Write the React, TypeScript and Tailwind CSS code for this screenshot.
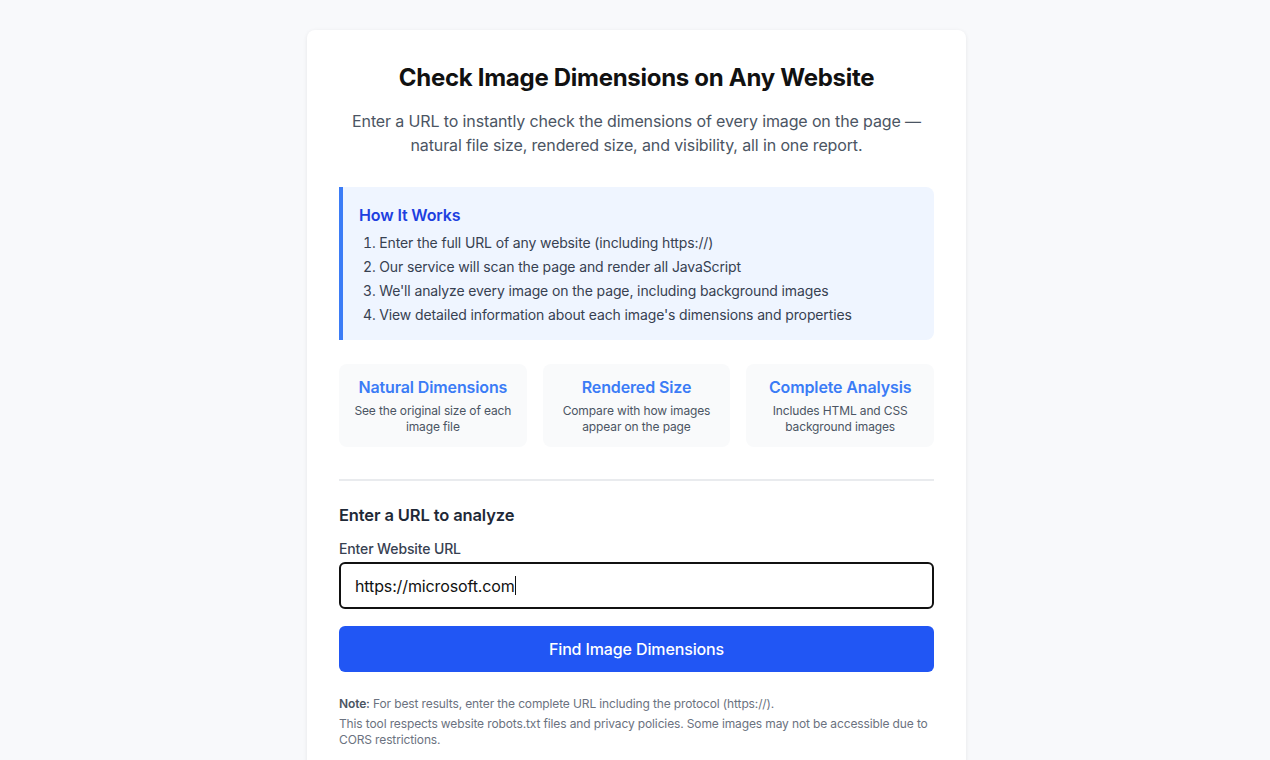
const steps = [
  "Enter the full URL of any website (including https://)",
  "Our service will scan the page and render all JavaScript",
  "We'll analyze every image on the page, including background images",
  "View detailed information about each image's dimensions and properties",
];

const features = [
  { title: "Natural Dimensions", desc: "See the original size of each image file" },
  { title: "Rendered Size", desc: "Compare with how images appear on the page" },
  { title: "Complete Analysis", desc: "Includes HTML and CSS background images" },
];

export default function App() {
  return (
    <div className="min-h-screen bg-[#f8f9fb] pl-[3px] pt-[30px] pb-10 font-['Inter',sans-serif] antialiased tracking-[-0.008em]">
      <div className="w-[659px] mx-auto bg-white rounded-lg shadow-[0_1px_4px_rgba(0,0,0,0.08)] px-8 pt-[32px] pb-8">
        <h1 className="text-[24px] leading-8 font-bold text-[#111] text-center tracking-[-0.012em]">
          Check Image Dimensions on Any Website
        </h1>
        <p className="mt-[15px] text-base leading-6 text-[#4b5563] text-center px-2">
          Enter a URL to instantly check the dimensions of every image on the page — natural file size, rendered size, and visibility, all in one report.
        </p>

        {/* How it works */}
        <div className="mt-[30px] bg-[#eff5ff] border-l-4 border-[#3b7cf6] rounded-r-lg px-4 pt-4 pb-[15px]">
          <h2 className="text-base leading-6 font-semibold text-[#1d40e0]">How It Works</h2>
          <ol className="mt-1.5 pl-1 list-decimal list-inside space-y-1 text-sm leading-5 text-[#374151]">
            {steps.map(s => <li key={s}>{s}</li>)}
          </ol>
        </div>

        {/* Features */}
        <div className="mt-6 grid grid-cols-3 gap-4">
          {features.map(f => (
            <div key={f.title} className="bg-[#f9fafb] rounded-lg px-3 pt-[11px] pb-3 text-center">
              <h3 className="text-base leading-6 font-semibold text-[#3b7cf6]">{f.title}</h3>
              <p className="mt-[4px] text-xs leading-4 text-[#4b5563]">{f.desc}</p>
            </div>
          ))}
        </div>

        <hr className="mt-8 border-0 border-t-2 border-[#e9ebee]" />

        <h2 className="mt-[20px] text-[16.5px] leading-7 font-semibold text-[#1f2937]">Enter a URL to analyze</h2>
        <label className="block mt-[10px] text-sm leading-5 font-medium text-[#374151]">Enter Website URL</label>
        <div className="mt-[3px] w-full h-[47px] border-2 border-[#111] rounded-md px-[14px] flex items-center text-base text-[#111]">
          <span>https://microsoft.com</span>
          <span className="w-px h-[19px] bg-[#111]" />
        </div>
        <button className="mt-[17px] w-full h-[46px] rounded-md bg-[#2156f4] text-white text-base font-medium">
          Find Image Dimensions
        </button>

        <p className="mt-[24px] text-xs leading-4 text-[#6b7280]">
          <span className="font-semibold text-[#4b5563]">Note:</span> For best results, enter the complete URL including the protocol (https://).
        </p>
        <p className="mt-1 text-xs leading-4 text-[#6b7280]">
          This tool respects website robots.txt files and privacy policies. Some images may not be accessible due to CORS restrictions.
        </p>
      </div>
    </div>
  );
}
